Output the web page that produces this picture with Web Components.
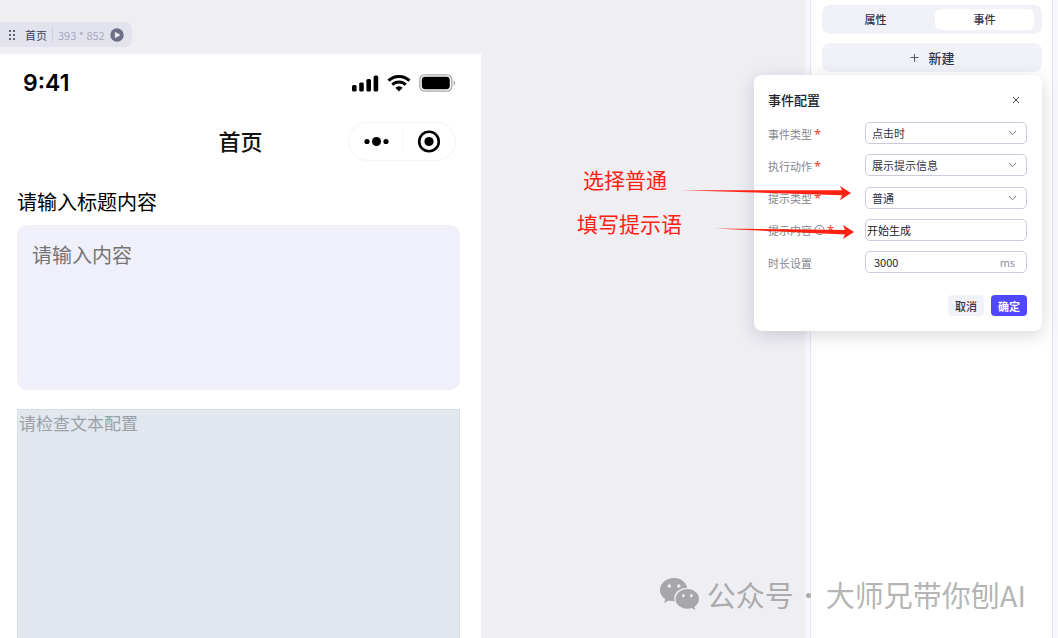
<!DOCTYPE html>
<html lang="zh-CN">
<head>
<meta charset="utf-8">
<meta name="viewport" content="width=device-width, initial-scale=1">
<title>首页</title>
<style>
html, body { margin: 0; height: 100%; }
body { font-family: "Noto Sans", "Noto Sans CJK SC", sans-serif; overflow: hidden; }
</style>
</head>
<body>
<app-editor></app-editor>
<script>
function define(name, html) {
  const tpl = document.createElement('template');
  tpl.innerHTML = '<style>*{box-sizing:border-box}button,input,select,textarea{font:inherit;margin:0}svg{display:block}</style>' + html;
  customElements.define(name, class extends HTMLElement {
    constructor() {
      super();
      this.attachShadow({ mode: 'open' }).append(tpl.content.cloneNode(true));
    }
  });
}

define('page-tag', `
<style>
:host { display: flex; align-items: center; width: max-content; height: 25px; padding: 0 8px; background: #e3e3ee; border-radius: 0 7px 7px 0; font-family: "Noto Sans CJK SC", sans-serif; font-size: 11px; line-height: 16px; color: #3f4154; }
.name { padding: 0 5px 0 9px; }
.size { border-left: 1px solid #cfd1e2; padding: 0 5px; color: #a5a7bd; }
button { border: 0; padding: 0; background: none; }
</style>
<svg width="8" height="12" fill="#35374a"><circle cx="2" cy="2" r="1"/><circle cx="6" cy="2" r="1"/><circle cx="2" cy="6" r="1"/><circle cx="6" cy="6" r="1"/><circle cx="2" cy="10" r="1"/><circle cx="6" cy="10" r="1"/></svg>
<span class="name">首页</span><span class="size">393 * 852</span>
<button aria-label="预览"><svg width="14" height="14"><circle cx="7" cy="7" r="6.7" fill="#6c6f86"/><path d="M5.2 4.2v5.6l4.8-2.8z" fill="#eeeef6" stroke="#eeeef6" stroke-width=".6" stroke-linejoin="round"/></svg></button>`);

define('status-bar', `
<style>
:host { display: flex; align-items: center; justify-content: space-between; height: 58px; padding: 0 4px 0 6px; font: 600 23px/28px Inter, sans-serif; color: #000; }
.icons { display: flex; align-items: center; gap: 8px; }
</style>
<span>9:41</span>
<span class="icons">
<svg width="27" height="17" viewBox="0 0 27 17"><rect x="0" y="10" width="4.6" height="6.4" rx="1.5"/><rect x="7.2" y="7.4" width="4.6" height="9" rx="1.5"/><rect x="14.4" y="4" width="4.6" height="12.4" rx="1.5"/><rect x="21.6" y=".6" width="4.6" height="15.8" rx="1.5"/></svg>
<svg width="24" height="17" viewBox="0 0 24 17" fill="none" stroke="#000" stroke-width="3"><path d="M1.500 5.700a15.200 15.200 0 0 1 21 0M5.300 9.700a9.600 9.600 0 0 1 13.400 0"/><path d="M12 16.400l-3.700-3.700a5.200 5.200 0 0 1 7.400 0z" fill="#000" stroke="none"/></svg>
<svg width="37" height="18" viewBox="0 0 37 18"><rect x=".8" y=".8" width="32" height="16.4" rx="5" fill="none" stroke="#a9a9a9" stroke-width="1.3"/><rect x="2.8" y="2.8" width="28" height="12.4" rx="3.4"/><path d="M34.600 6.200a3.200 3.200 0 0 1 0 5.600z" fill="#a9a9a9"/></svg>
</span>`);

define('nav-bar', `
<style>
:host { display: grid; grid-template-columns: 1fr auto 1fr; align-items: center; height: 58px; padding: 0 4px 0 8px; }
h1 { margin: 0; font-size: 22px; line-height: 32px; font-weight: 500; color: #111; }
.capsule { justify-self: end; display: flex; align-items: center; width: 108px; height: 39px; border: 1px solid #f3f3f3; border-radius: 20px; }
button { flex: 1; display: flex; justify-content: center; border: 0; padding: 0 0 0 1px; background: none; }
button + button { border-left: 1px solid #f8f8f8; }
</style>
<span></span><h1>首页</h1>
<div class="capsule">
<button aria-label="更多"><svg width="26" height="24"><circle cx="4" cy="12.500" r="2.600"/><circle cx="13.500" cy="12.500" r="4.500"/><circle cx="23" cy="12.500" r="2.600"/></svg></button>
<button aria-label="关闭"><svg width="24" height="24"><circle cx="12" cy="12.500" r="9.800" fill="none" stroke="#000" stroke-width="2.600"/><circle cx="12" cy="12.500" r="4.600"/></svg></button>
</div>`);

define('phone-page', `
<style>
:host { display: flex; flex-direction: column; width: 481px; padding: 0 21px 0 17px; background: #fff; }
label { margin: 17px 0 7px; font-size: 20px; line-height: 31px; color: #000; }
textarea { flex: none; width: 100%; height: 165px; padding: 16px 15px; border: 0; border-radius: 10px; background: #f0f0fa; font-size: 20px; line-height: 30px; resize: none; outline: 0; }
textarea::placeholder { color: #757575; }
.output { flex: 1; margin-top: 19px; padding: 1px; border: 1px solid #d6dee6; border-bottom: 0; background: #e0e7ef; font-size: 17px; line-height: 26px; color: #9c9fa6; }
</style>
<status-bar></status-bar>
<nav-bar></nav-bar>
<label for="content">请输入标题内容</label>
<textarea id="content" placeholder="请输入内容"></textarea>
<div class="output">请检查文本配置</div>`);

define('side-panel', `
<style>
:host { display: flex; flex-direction: column; gap: 9px; padding: 5px 10px 0 11px; background: #fff; border: solid #e6e6ef; border-width: 0 1px; font-size: 11px; color: #30334a; }
.tabs { display: flex; gap: 10px; height: 29px; padding: 4px 8px 4px 4px; border-radius: 8px; background: #f1f2f8; }
button { border: 0; padding: 0; color: inherit; background: none; border-radius: 6px; font-weight: 500; }
.tabs button { flex: 1; line-height: 16px; }
.tabs [aria-selected=true] { background: #fff; }
.add { display: flex; align-items: center; justify-content: center; gap: 9px; height: 29px; border-radius: 8px; background: #f1f2f8; font-size: 13px; line-height: 20px; }
</style>
<div class="tabs" role="tablist"><button role="tab" aria-selected="false">属性</button><button role="tab" aria-selected="true">事件</button></div>
<button class="add"><svg width="10" height="10" stroke="#555869" stroke-width="1"><path d="M5.500 1v8M1.500 4.500h8"/></svg>新建</button>`);

define('select-box', `
<style>
:host { display: block; position: relative; }
::slotted(select) { box-sizing: border-box; display: block; width: 100%; height: 22px; margin: 0; padding: 0 22px 0 6px; border: 1px solid #cbcbdd; border-radius: 5px; background: #fff; appearance: none; font: inherit; color: #30334a; outline: 0; }
svg { position: absolute; right: 10px; top: 7px; pointer-events: none; }
</style>
<slot></slot><svg width="9" height="8" fill="none" stroke="#777986" stroke-width="1"><path d="M1 2l3.500 3.800L8 2"/></svg>`);

define('event-dialog', `
<style>
:host { display: flex; flex-direction: column; padding: 15px 15px 15px 14px; background: #fff; border-radius: 8px; box-shadow: 0 4px 18px rgba(40,40,70,.18); font-family: "Noto Sans CJK SC", sans-serif; font-size: 11px; line-height: 16px; color: #30334a; }
header { display: flex; align-items: center; justify-content: space-between; height: 20px; padding-right: 6px; }
h2 { margin: 0; font-size: 13px; line-height: 20px; font-weight: 500; color: #22242f; }
button { border: 0; padding: 0; background: none; color: inherit; }
form { display: contents; }
.rows { display: grid; grid-template-columns: 97px 1fr; align-content: space-between; align-items: center; height: 151px; margin-top: 12px; }
label { display: flex; align-items: center; gap: 2px; height: 22px; padding-top: 1px; color: #85878f; }
i { font-family: "Noto Sans", sans-serif; font-style: normal; color: #f0442c; font-size: 13px; line-height: 16px; }
input { display: block; width: 100%; min-width: 0; height: 22px; padding: 0 1px; border: 1px solid #cbcbdd; border-radius: 5px; background: #fff; color: #22242f; outline: 0; }
.unit { display: flex; align-items: center; height: 22px; padding: 0 11px 0 8px; border: 1px solid #cbcbdd; border-radius: 5px; color: #94969e; }
.unit input { flex: 1; height: 20px; padding: 0; border: 0; }
footer { display: flex; justify-content: flex-end; gap: 7px; margin-top: 22px; }
footer button { width: 36px; height: 21px; border-radius: 4px; background: #f1f2f8; font-weight: 500; }
footer .ok { background: #5147ff; color: #fff; font-weight: 700; }
</style>
<header><h2>事件配置</h2><button aria-label="关闭"><svg width="10" height="10" stroke="#4a4c57" stroke-width="1"><path d="M2 2l6 6M8 2L2 8"/></svg></button></header>
<form onsubmit="return false">
<div class="rows">
<label for="type">事件类型<i>*</i></label><select-box><select id="type"><option>点击时</option></select></select-box>
<label for="action">执行动作<i>*</i></label><select-box><select id="action"><option>展示提示信息</option></select></select-box>
<label for="tip">提示类型<i>*</i></label><select-box><select id="tip"><option>普通</option></select></select-box>
<label for="text">提示内容<svg width="11" height="11" fill="none" stroke="#777a86"><circle cx="5.500" cy="5" r="4.500"/><path d="M5.500 4.500v3M5.500 2.500v1"/></svg><i>*</i></label><input id="text" value="开始生成">
<label for="duration">时长设置</label><span class="unit"><input id="duration" value="3000">ms</span>
</div>
<footer><button type="button">取消</button><button class="ok">确定</button></footer>
</form>`);

define('note-layer', `
<style>
:host { display: block; color: #ff2213; font-size: 21px; line-height: 30px; }
p { margin: 0 0 14px 6px; }
p + p { margin: 0; }
svg { position: absolute; left: 104px; top: 19px; }
</style>
<p>选择普通</p><p>填写提示语</p>
<svg width="176" height="58" fill="#ff2213"><path d="M0 6.300L161 6.200 159 2 170 9 159 16.300 161 11.200zM34 44.500L164 46 162 41 173 48 162 55 164 50.400z"/></svg>`);

define('account-mark', `
<style>
:host { display: flex; align-items: center; font-family: "Noto Sans CJK SC", sans-serif; font-size: 29px; line-height: 42px; color: rgba(60,60,60,.4); white-space: nowrap; }
svg { margin-right: 8px; }
.dot { width: 5px; height: 5px; margin: 2px 15px 0 12px; border-radius: 3px; background: currentColor; }
</style>
<svg width="39" height="32" viewBox="0 0 39 32" fill="currentColor"><path fill-rule="evenodd" d="M14 0C6.2 0 0 5.300 0 12c0 3.700 2 7 5.300 9.200L4 25l4.700-2.500c1.900.6 3.900.9 6.100.8C12.500 16 18 10 27.200 9.700 26 4 20.700 0 14 0zM9.300 6.300a1.700 1.700 0 1 1 0 3.500 1.700 1.700 0 0 1 0-3.500zm9.500 0a1.700 1.700 0 1 1 0 3.500 1.700 1.700 0 0 1 0-3.500z"/><path fill-rule="evenodd" d="M27.400 11C21 11 15.600 15.400 15.600 21S21 30.700 27.400 30.700c1.500 0 2.800-.2 4.100-.6l3.900 1.900-1.100-3.200c2.900-1.900 4.700-4.700 4.700-7.800C39 15.400 33.800 11 27.400 11zm-4 5.300a1.400 1.400 0 1 1 0 2.900 1.400 1.400 0 0 1 0-2.900zm8 0a1.400 1.400 0 1 1 0 2.900 1.400 1.400 0 0 1 0-2.900z"/></svg>公众号<span class="dot"></span>大师兄带你刨AI`);

define('app-editor', `
<style>
:host { position: relative; display: flex; height: 100vh; overflow: hidden; background: #f7f7fc; }
main { flex: 1; display: flex; flex-direction: column; gap: 7px; padding-top: 22px; margin-right: 5px; background: #eeeef3; }
phone-page { flex: 1; }
side-panel { flex: none; width: 243px; margin-right: 5px; }
event-dialog { position: absolute; top: 75px; right: 16px; width: 288px; }
note-layer { position: absolute; top: 165px; right: 376px; }
account-mark { position: absolute; right: 32px; bottom: 23px; }
</style>
<main><page-tag></page-tag><phone-page></phone-page></main>
<side-panel></side-panel>
<event-dialog></event-dialog>
<note-layer></note-layer>
<account-mark></account-mark>`);
</script>
</body>
</html>
